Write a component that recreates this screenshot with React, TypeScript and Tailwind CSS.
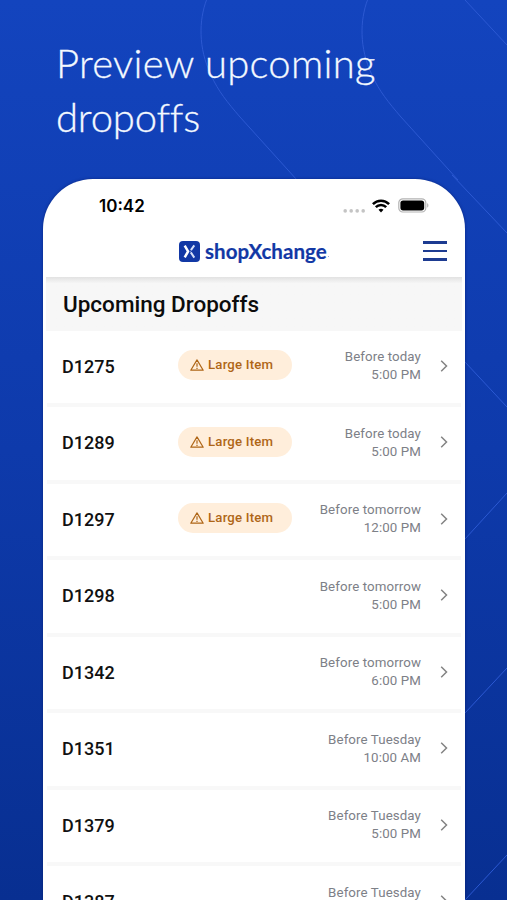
import React from 'react';

interface Dropoff {
  id: string;
  day: string;
  time: string;
  large?: boolean;
}

const dropoffs: Dropoff[] = [
  { id: 'D1275', day: 'Before today', time: '5:00 PM', large: true },
  { id: 'D1289', day: 'Before today', time: '5:00 PM', large: true },
  { id: 'D1297', day: 'Before tomorrow', time: '12:00 PM', large: true },
  { id: 'D1298', day: 'Before tomorrow', time: '5:00 PM' },
  { id: 'D1342', day: 'Before tomorrow', time: '6:00 PM' },
  { id: 'D1351', day: 'Before Tuesday', time: '10:00 AM' },
  { id: 'D1379', day: 'Before Tuesday', time: '5:00 PM' },
  { id: 'D1387', day: 'Before Tuesday', time: '5:00 PM' },
];

function BackgroundLines() {
  return (
    <svg className="absolute inset-0 pointer-events-none" width="507" height="900" viewBox="0 0 507 900" fill="none" stroke="#2c59d2" strokeWidth="1">
      <path d="M206.5 0C199 20 198 48 211 75C218 91 228 103 240 117L297 180" />
      <path d="M367.5 0C360 20 359 48 372 75C379 91 389 103 401 117L458 180" />
      <path d="M465 0L507 45" />
      <path d="M452 175L507 233" />
      <path d="M465 362L507 407" />
      <path d="M507 493L465 539" />
      <path d="M507 668L465 713" />
      <path d="M507 855L465 900" />
    </svg>
  );
}

function StatusBar() {
  return (
    <div className="flex items-center justify-between h-[54px] pl-[56px] pr-[36px]">
      <span className="text-[17px] font-semibold text-black font-['Inter',sans-serif] pt-0.5">10:42</span>
      <div className="flex items-center">
        <svg width="23" height="12" viewBox="0 0 23 12" fill="#c4c4c4" className="mt-[5px]">
          <circle cx="2.2" cy="7.9" r="1.8" />
          <circle cx="8.2" cy="7.9" r="1.8" />
          <circle cx="14.2" cy="7.9" r="1.8" />
          <circle cx="20.2" cy="7.9" r="1.8" />
        </svg>
        <svg width="18" height="14" viewBox="0 0 18 14" fill="none" stroke="#000" strokeWidth="2.5" className="ml-[6px]">
          <path d="M0.9 5.2C5.4 0.6 12.6 0.6 17.1 5.2" />
          <path d="M3.8 8.2C6.7 5.3 11.3 5.3 14.2 8.2" />
          <path d="M9 13.4L6.5 10.8C7.9 9.5 10.1 9.5 11.5 10.8Z" fill="#000" stroke="none" />
        </svg>
        <svg width="31" height="15" viewBox="0 0 31 15" className="ml-[8px] -mt-0.5">
          <rect x="0.8" y="0.8" width="27" height="13.2" rx="4" fill="#fff" stroke="#b3b3b3" strokeWidth="1.2" />
          <rect x="2.4" y="2.4" width="23.8" height="10" rx="2.7" fill="#000" />
          <path d="M29.2 5.2C30.8 5.8 30.8 9 29.2 9.6Z" fill="#b3b3b3" />
        </svg>
      </div>
    </div>
  );
}

function Logo() {
  return (
    <div className="flex items-center">
      <svg width="21" height="21" viewBox="0 0 21 21" fill="none">
        <rect width="21" height="21" rx="4" fill="#1238a5" />
        <path d="M5.7 4.6L9.1 10.4L5.7 16.4" stroke="#fff" strokeWidth="2.5" />
        <path d="M15.3 4.4L11.9 9.2M11.8 11.4L15.3 16.6" stroke="#d5dff8" strokeWidth="2" />
        <path d="M10.4 10.4H12" stroke="#6f8bd0" strokeWidth="1.4" />
      </svg>
      <span className="ml-[5px] text-[20.5px] leading-6 font-bold text-[#1238a5] font-['Lato',sans-serif] tracking-[0.05px] [-webkit-text-stroke:0.2px_#1238a5]">shopXchange</span>
      <span className="mt-[11px] ml-px size-px bg-[#9fb0dc]" />
    </div>
  );
}

function NavBar() {
  return (
    <div className="flex items-center h-9 pr-[18px] pl-[136px] justify-between">
      <Logo />
      <button aria-label="Menu" className="flex flex-col gap-[6px]">
        <span className="block w-6 h-[2.5px] bg-[#1d3b91]" />
        <span className="block w-6 h-[2.5px] bg-[#1d3b91]" />
        <span className="block w-6 h-[2.5px] bg-[#1d3b91]" />
      </button>
    </div>
  );
}

function LargeItemBadge() {
  return (
    <div className="flex items-center w-[114px] h-[30px] mb-[2px] rounded-full bg-[#ffeedb] pl-[12px] text-[#af6617]">
      <svg width="14" height="12" viewBox="0 0 14 12" fill="none" stroke="currentColor" strokeWidth="1.2" strokeLinejoin="round">
        <path d="M7 0.9L13.2 11.2H0.8Z" />
        <path d="M7 4.2V7.8M7 8.8V9.9" />
      </svg>
      <span className="ml-[4px] text-[13.2px] font-medium tracking-[0.2px]">Large Item</span>
    </div>
  );
}

function DropoffRow({ dropoff }: { dropoff: Dropoff }) {
  return (
    <div className="flex items-center h-[76.5px] shrink-0 border-b-4 border-[#f8f8f8] pl-[15px] pr-[13px] pb-px">
      <span className="w-[116px] text-[18px] font-medium text-[#111]">{dropoff.id}</span>
      {dropoff.large && <LargeItemBadge />}
      <div className="ml-auto text-right text-[13.3px] leading-[18px] tracking-[0.1px] text-[#7d8087]">
        <div>{dropoff.day}</div>
        <div>{dropoff.time}</div>
      </div>
      <svg width="8" height="12" viewBox="0 0 8 12" fill="none" stroke="#838383" strokeWidth="1.5" className="ml-[19px] mb-px">
        <path d="M1.2 0.8L6.5 6L1.2 11.2" />
      </svg>
    </div>
  );
}

export default function App() {
  return (
    <div className="relative w-[507px] h-[900px] overflow-hidden flex flex-col bg-linear-to-b from-[#1344be] via-[#0e3aab] to-[#082f91] font-['Roboto',sans-serif]">
      <BackgroundLines />
      <h1 className="relative h-[179px] shrink-0 pl-[56px] pt-[36px] text-[40px] leading-[54px] font-light tracking-[0.3px] text-[#f4f9ff] font-['Lato',sans-serif] [-webkit-text-stroke:0.3px_#f4f9ff]">
        Preview upcoming
        <br />
        <span className="tracking-[-0.2px]">dropoffs</span>
      </h1>
      <div className="relative flex-1 min-h-0 ml-[43px] w-[422px] rounded-t-[50px] bg-white overflow-hidden flex flex-col shadow-[0_0_3px_rgba(0,20,90,0.6)]">
        <div className="shrink-0 h-[98px]">
          <StatusBar />
          <NavBar />
        </div>
        <div className="flex flex-col flex-1 min-h-0">
          <div className="shrink-0 h-[53.5px] mx-[3px] pl-[17px] pt-[2px] flex items-center bg-linear-to-b from-[#e2e2e2] via-[#f7f7f7] via-12% to-[#f7f7f7]">
            <h2 className="text-[22.5px] font-medium text-[#0c0c0c]">Upcoming Dropoffs</h2>
          </div>
          <div className="mx-1 flex flex-col">
            {dropoffs.map((dropoff) => (
              <DropoffRow key={dropoff.id} dropoff={dropoff} />
            ))}
          </div>
        </div>
      </div>
    </div>
  );
}
